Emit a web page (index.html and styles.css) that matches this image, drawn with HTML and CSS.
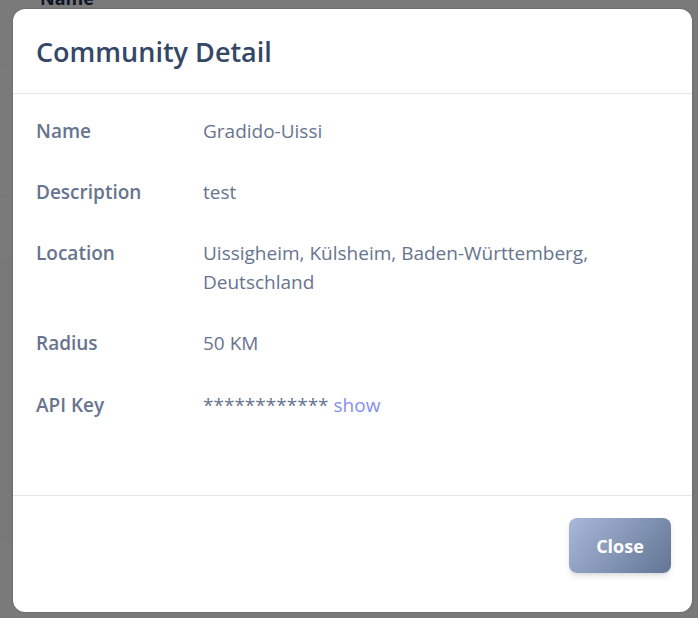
FILE: index.html
```html
<!DOCTYPE html>
<html lang="en">
<head>
<meta charset="utf-8">
<title>Community Detail</title>
<link rel="stylesheet" href="styles.css">
</head>
<body>
<div class="page">
  <div class="table">
    <div class="thead"><span class="th">Name</span></div>
    <div class="tr"></div>
    <div class="tr"></div>
    <div class="tr"></div>
    <div class="tr tr-last"></div>
  </div>
</div>
<div class="backdrop"></div>
<div class="modal" role="dialog" aria-labelledby="modal-title">
  <div class="modal-header">
    <h2 id="modal-title" class="modal-title">Community Detail</h2>
  </div>
  <div class="modal-body">
    <dl class="details">
      <div class="row"><dt class="label">Name</dt><dd class="value">Gradido-Uissi</dd></div>
      <div class="row"><dt class="label">Description</dt><dd class="value">test</dd></div>
      <div class="row"><dt class="label">Location</dt><dd class="value">Uissigheim, Külsheim, Baden-Württemberg, Deutschland</dd></div>
      <div class="row"><dt class="label">Radius</dt><dd class="value">50 KM</dd></div>
      <div class="row"><dt class="label">API Key</dt><dd class="value">************ <a class="link" href="#">show</a></dd></div>
    </dl>
  </div>
  <div class="modal-footer">
    <button class="btn" type="button">Close</button>
  </div>
</div>
</body>
</html>
```

FILE: styles.css
```css
* { box-sizing: border-box; }
html, body { margin: 0; padding: 0; }
body {
  width: 698px;
  height: 618px;
  overflow: hidden;
  font-family: "Open Sans", "Noto Sans", sans-serif;
  background: #f4f4f4;
  position: relative;
}
.table {
  display: flex;
  flex-direction: column;
}
.thead {
  height: 80px;
  padding: 0 0 0 40px;
  margin-top: -14px;
  border-bottom: 1px solid #e9ecef;
}
.th {
  font-weight: 700;
  font-size: 18px;
  color: #1b2a4e;
}
.tr {
  height: 65px;
  border-bottom: 1px solid #e9ecef;
}
.tr-last { background: #f0f0f0; height: 280px; }

.backdrop {
  position: absolute;
  inset: 0;
  background: rgba(0, 0, 0, 0.5);
}
.modal {
  position: absolute;
  top: 9px;
  left: 13px;
  width: 679px;
  height: 603px;
  background: #fff;
  border-radius: 12px;
  box-shadow: 0 0 2px rgba(0,0,0,0.35);
  display: flex;
  flex-direction: column;
}
.modal-header {
  height: 85px;
  padding: 2px 23px 0;
  display: flex;
  align-items: center;
  border-bottom: 1px solid #e5e5e5;
}
.modal-title {
  margin: 0;
  font-size: 27px;
  font-weight: 600;
  color: #344767;
  line-height: 1.3;
}
.modal-body {
  flex: 1;
  padding: 23px 23px 0 23px;
  border-bottom: 1px solid #e5e5e5;
}
.details {
  margin: 0;
  display: flex;
  flex-direction: column;
  gap: 32px;
}
.row {
  display: grid;
  grid-template-columns: 167px 1fr;
  font-size: 19px;
  line-height: 29px;
  color: #67748e;
}
.label {
  margin: 0;
  font-weight: 600;
}
.value {
  margin: 0;
  padding-right: 20px;
}
.row:last-child { margin-top: 1px; }
.link {
  color: #8490ef;
  text-decoration: none;
}
.modal-footer {
  height: 116px;
  padding: 22px 21px 0 0;
  display: flex;
  justify-content: flex-end;
  align-items: flex-start;
}
.btn {
  width: 102px;
  height: 55px;
  border: 0;
  border-radius: 8px;
  background: linear-gradient(310deg, #627594 0%, #a8b8d8 100%);
  color: #fff;
  font-family: "Open Sans", "Noto Sans", sans-serif;
  font-weight: 700;
  font-size: 18px;
  box-shadow: 0 4px 7px -1px rgba(0,0,0,0.11), 0 2px 4px -1px rgba(0,0,0,0.07);
  cursor: pointer;
}
```
